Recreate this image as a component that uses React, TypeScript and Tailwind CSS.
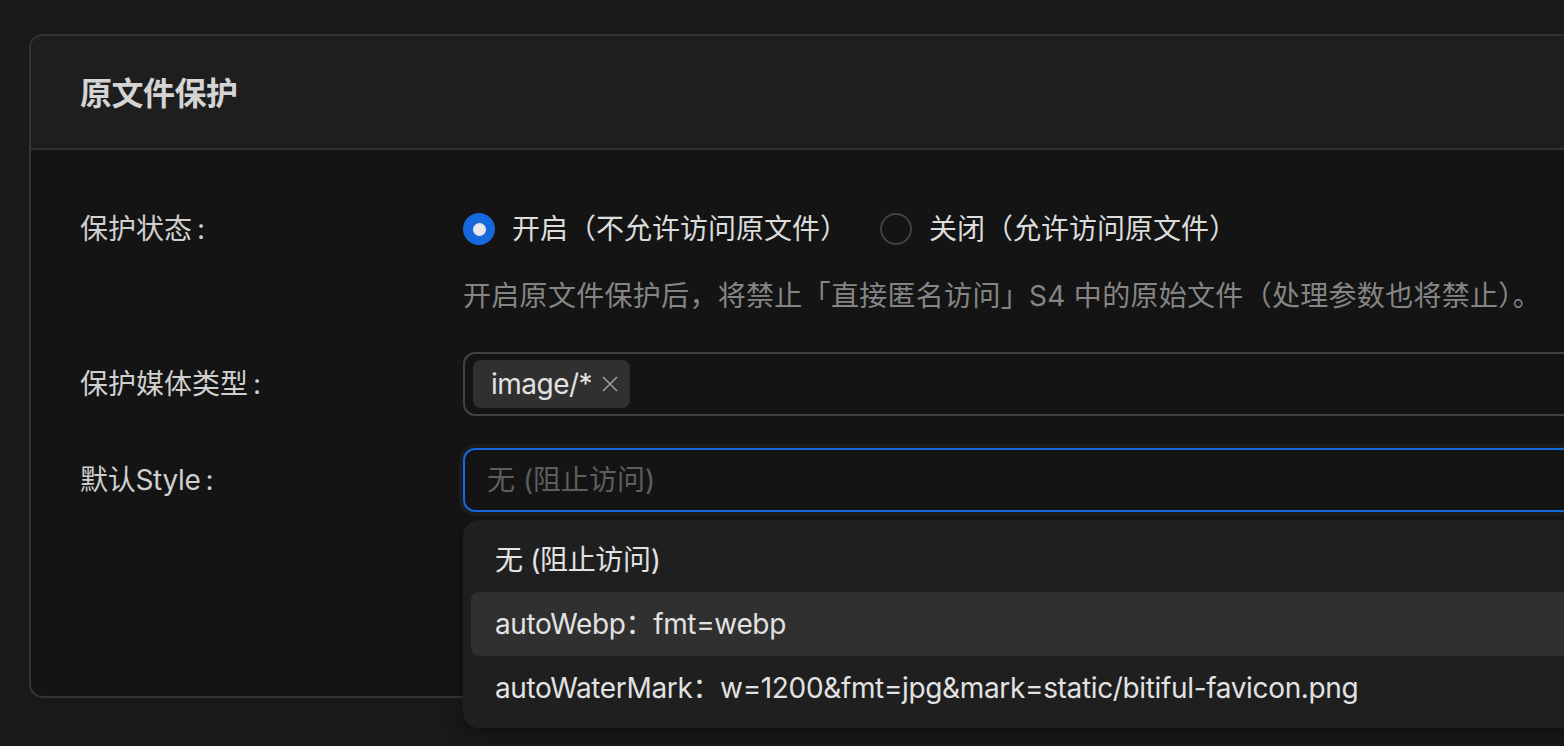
import React from "react";

const font = { fontFamily: "Inter, 'Noto Sans CJK SC', sans-serif" };

function Radio({ checked, label }: { checked: boolean; label: string }) {
  return (
    <div className="flex items-center mr-[32px]">
      {checked ? (
        <span className="w-[32px] h-[32px] rounded-full bg-[#1668dc] flex items-center justify-center">
          <span className="w-[13px] h-[13px] rounded-full bg-[#e8e8e8]" />
        </span>
      ) : (
        <span className="w-[32px] h-[32px] rounded-full border-2 border-[#424242]" />
      )}
      <span className="ml-[17px] text-[28px] leading-[44px] text-[#dcdcdc]">{label}</span>
    </div>
  );
}

export default function App() {
  return (
    <div
      className="w-[1564px] h-[746px] overflow-hidden bg-[#191919] pt-[34px] pl-[29px]"
      style={font}
    >
      <div className="w-[1700px] h-[664px] rounded-[14px] border-2 border-[#333333] bg-[#141414]">
        <div className="h-[114px] bg-[#1e1e1e] rounded-t-[12px] border-b-2 border-[#303030] flex items-center pl-[49px] pt-[4px]">
          <h1 className="text-[32px] font-semibold text-[#d4d4d4] leading-[48px] tracking-[-0.5px]">原文件保护</h1>
        </div>
        <div className="pt-[47px] pl-[49px]">
          <div className="flex">
            <div className="w-[383px] h-[64px] flex items-center text-[28px] text-[#cfcfcf]">
              保护状态<span className="ml-[5px]">:</span>
            </div>
            <div className="flex-1">
              <div className="h-[64px] flex items-center">
                <Radio checked label="开启（不允许访问原文件）" />
                <Radio checked={false} label="关闭（允许访问原文件）" />
              </div>
              <p className="mt-[13px] text-[28px] leading-[44px] text-[#858585] tracking-[0.3px]">
                开启原文件保护后，将禁止「直接匿名访问」S4 中的原始文件（处理参数也将禁止）。
              </p>
            </div>
          </div>

          <div className="flex mt-[34px]">
            <div className="w-[383px] h-[64px] flex items-center text-[28px] text-[#cfcfcf]">
              保护媒体类型<span className="ml-[5px]">:</span>
            </div>
            <div className="flex-1 h-[64px] rounded-[12px] border-2 border-[#424242] flex items-center pl-[8px]">
              <span className="h-[48px] rounded-[8px] bg-[#303030] flex items-center pl-[18px] pr-[12px]">
                <span className="text-[28px] text-[#e2e2e2] tracking-[-0.5px]">image/*</span>
                <svg className="ml-[10px]" width="16" height="16" viewBox="0 0 16 16" fill="none" stroke="#9a9a9a" strokeWidth="1.6">
                  <path d="M1 1l14 14M15 1L1 15" />
                </svg>
              </span>
            </div>
          </div>

          <div className="flex mt-[32px]">
            <div className="w-[383px] h-[64px] flex items-center text-[28px] text-[#cfcfcf] tracking-[-0.3px]">
              默认Style<span className="ml-[5px]">:</span>
            </div>
            <div className="flex-1 relative">
              <div className="h-[64px] rounded-[12px] border-2 border-[#1668dc] shadow-[0_0_0_4px_#1b1c1f] flex items-center pl-[22px]">
                <span className="text-[28px] text-[#5e5e5e]">无 (阻止访问)</span>
              </div>
              <div className="absolute left-0 right-0 top-[72px] h-[208px] rounded-[16px] bg-[#1f1f1f] p-[8px] shadow-[0_6px_16px_rgba(0,0,0,0.35)] z-10 tracking-[-0.35px]">
                <div className="h-[64px] rounded-[8px] flex items-center px-[24px] text-[28px] text-[#e2e2e2]">
                  无 (阻止访问)
                </div>
                <div className="h-[64px] rounded-[8px] bg-[#303030] flex items-center px-[24px] text-[28px] text-[#e2e2e2]">
                  autoWebp：fmt=webp
                </div>
                <div className="h-[64px] rounded-[8px] flex items-center px-[24px] text-[28px] text-[#e2e2e2]">
                  autoWaterMark：w=1200&amp;fmt=jpg&amp;mark=static/bitiful-favicon.png
                </div>
              </div>
            </div>
          </div>
        </div>
      </div>
    </div>
  );
}
